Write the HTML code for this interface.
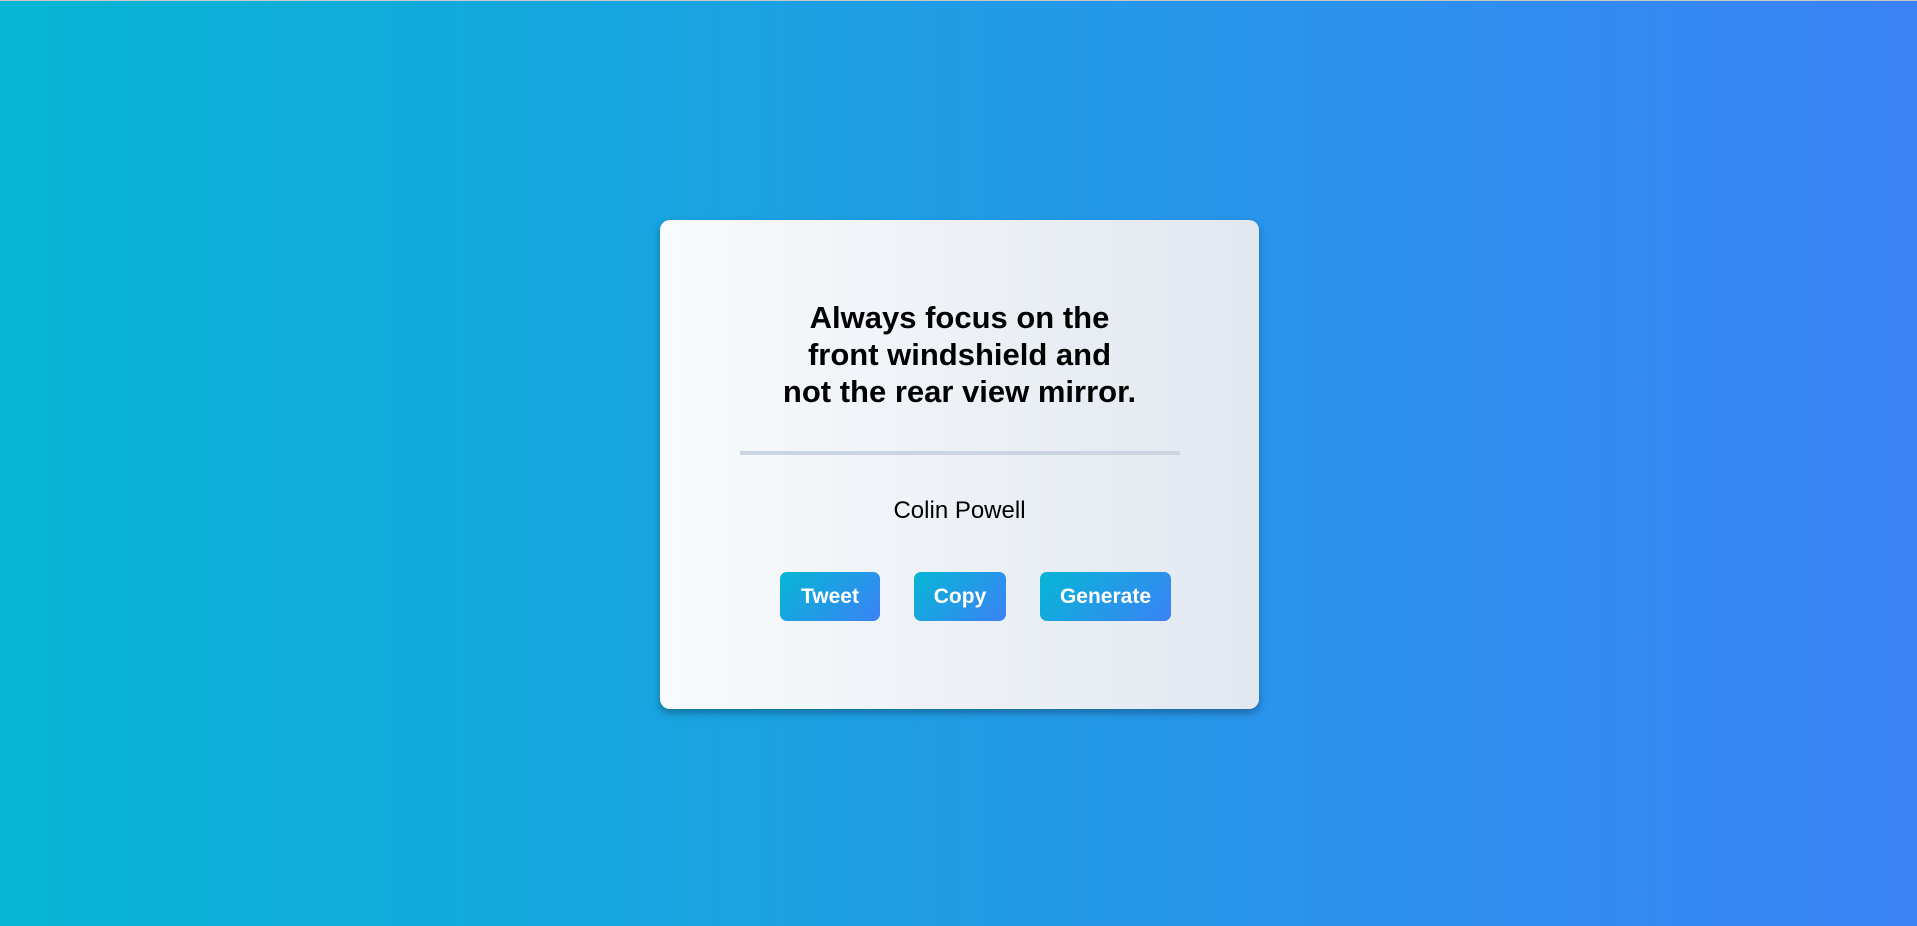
<!DOCTYPE html>
<html><head><meta charset="utf-8"><style>
html,body{margin:0;padding:0;width:1917px;height:926px;overflow:hidden}
body{background:linear-gradient(to right,#06b6d4,#3b82f6);border-top:1px solid #c8c8c8;box-sizing:border-box;position:relative;font-family:"Liberation Sans",sans-serif}
.card{position:absolute;left:660px;top:219px;width:599px;height:489px;border-radius:10px;background:linear-gradient(to right,#f8fafc,#e2e8f0);box-shadow:0 4px 8px rgba(0,0,0,.3)}
.q{position:absolute;left:0;width:599px;top:79px;text-align:center;font-weight:bold;font-size:31px;line-height:37px;letter-spacing:0;color:#000}
.hr{position:absolute;left:80px;width:440px;top:231px;height:4px;background:#cbd5e1}
.a{position:absolute;left:0;width:599px;top:277px;text-align:center;font-size:24px;color:#000}
.b{position:absolute;top:352px;height:49px;border-radius:7px;background:linear-gradient(135deg,#06b6d4,#3b82f6);color:#fff;font-weight:bold;font-size:21px;line-height:49px;text-align:center}
</style></head><body>
<div class="card">
<div class="q">Always focus on the<br>front windshield and<br>not the rear view mirror.</div>
<div class="hr"></div>
<div class="a">Colin Powell</div>
<div class="b" style="left:120px;width:100px">Tweet</div>
<div class="b" style="left:254px;width:92px">Copy</div>
<div class="b" style="left:380px;width:131px">Generate</div>
</div>
</body></html>
